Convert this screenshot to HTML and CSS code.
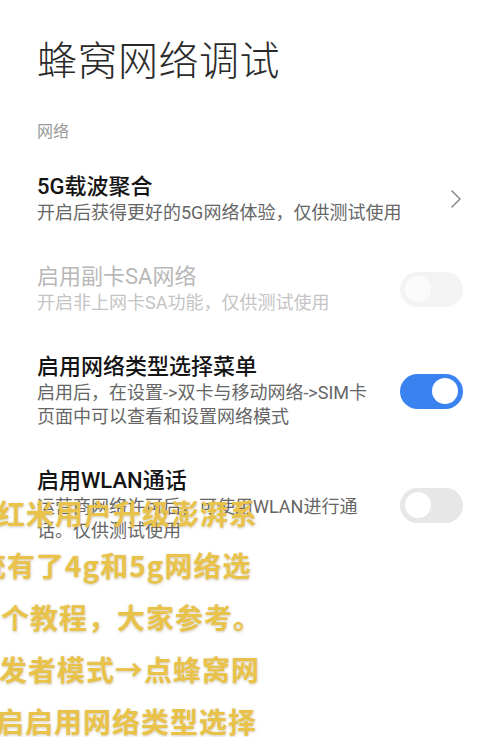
FILE: index.html
```html
<!DOCTYPE html>
<html lang="zh-CN">
<head>
<meta charset="utf-8">
<link rel="stylesheet" href="styles.css">
</head>
<body>
<div class="page">
  <h1 class="title">蜂窝网络调试</h1>
  <div class="section">网络</div>
  <div class="list">
    <div class="item">
      <div class="text">
        <div class="name">5G载波聚合</div>
        <div class="desc">开启后获得更好的5G网络体验，仅供测试使用</div>
      </div>
      <svg class="chevron" width="12" height="20" viewBox="0 0 12 20"><path d="M2 2 L10 10 L2 18" fill="none" stroke="#8a8a8a" stroke-width="1.6" stroke-linecap="round" stroke-linejoin="round"/></svg>
    </div>
    <div class="item disabled">
      <div class="text">
        <div class="name">启用副卡SA网络</div>
        <div class="desc">开启非上网卡SA功能，仅供测试使用</div>
      </div>
      <div class="toggle off dim"><span class="knob"></span></div>
    </div>
    <div class="item">
      <div class="text">
        <div class="name">启用网络类型选择菜单</div>
        <div class="desc">启用后，在设置-&gt;双卡与移动网络-&gt;SIM卡<br>页面中可以查看和设置网络模式</div>
      </div>
      <div class="toggle on"><span class="knob"></span></div>
    </div>
    <div class="item">
      <div class="text">
        <div class="name">启用WLAN通话</div>
        <div class="desc">运营商网络许可后，可使用WLAN进行通<br>话。仅供测试使用</div>
      </div>
      <div class="toggle off"><span class="knob"></span></div>
    </div>
  </div>
</div>
<div class="overlay">
  <div class="line l1">红米用户升级澎湃系</div>
  <div class="line l2">统有了4g和5g网络选</div>
  <div class="line l3">个教程，大家参考。</div>
  <div class="line l4">发者模式→点蜂窝网</div>
  <div class="line l5">启启用网络类型选择</div>
</div>
</body>
</html>
```

FILE: styles.css
```css
html, body {
  margin: 0;
  padding: 0;
  background: #ffffff;
}
body {
  width: 500px;
  height: 737px;
  overflow: hidden;
  position: relative;
  font-family: "Roboto", "Noto Sans CJK SC", "Noto Sans", sans-serif;
}
.page {
  padding: 34px 37px 0 37px;
}
.title {
  margin: 0;
  font-family: "Noto Sans CJK SC", sans-serif;
  font-size: 40px;
  line-height: 48px;
  font-weight: 300;
  color: #2a2a2a;
  letter-spacing: 0.5px;
}
.section {
  margin-top: 38px;
  font-size: 16px;
  line-height: 24px;
  color: #9a9a9a;
}
.list {
  margin-top: 29px;
  display: flex;
  flex-direction: column;
  gap: 38px;
}
.item {
  display: flex;
  align-items: center;
  justify-content: space-between;
}
.name {
  font-size: 22px;
  line-height: 28px;
  font-weight: 500;
  color: #141414;
}
.desc {
  font-size: 18px;
  line-height: 24px;
  color: #666666;
}
.disabled .name {
  color: #b8b8b8;
  font-weight: 400;
}
.disabled .desc {
  color: #c4c4c4;
}
.chevron {
  margin-right: 1px;
}
.toggle {
  width: 63px;
  height: 35px;
  border-radius: 18px;
  box-sizing: border-box;
  padding: 0 5px;
  display: flex;
  align-items: center;
  flex-shrink: 0;
}
.knob {
  width: 26px;
  height: 26px;
  border-radius: 50%;
  background: #ffffff;
}
.toggle.on {
  background: #3a82f0;
  justify-content: flex-end;
}
.toggle.off {
  background: #e7e7e7;
}
.toggle.dim {
  background: #f3f3f3;
}
.toggle.dim .knob {
  background: #fbfbfb;
}
.overlay {
  position: absolute;
  left: 0;
  top: 487px;
  width: 500px;
}
.line {
  font-family: "Noto Sans CJK SC", sans-serif;
  font-size: 28px;
  line-height: 52px;
  font-weight: 700;
  color: #e9c24a;
  letter-spacing: 1px;
  white-space: nowrap;
  text-shadow: 0 1px 3px rgba(120, 100, 40, 0.35);
}
.l1 { margin-left: -3px; }
.l2 { margin-left: -22px; }
.l3 { margin-left: 1px; }
.l4 { margin-left: -1px; }
.l5 { margin-left: -4px; }
```
